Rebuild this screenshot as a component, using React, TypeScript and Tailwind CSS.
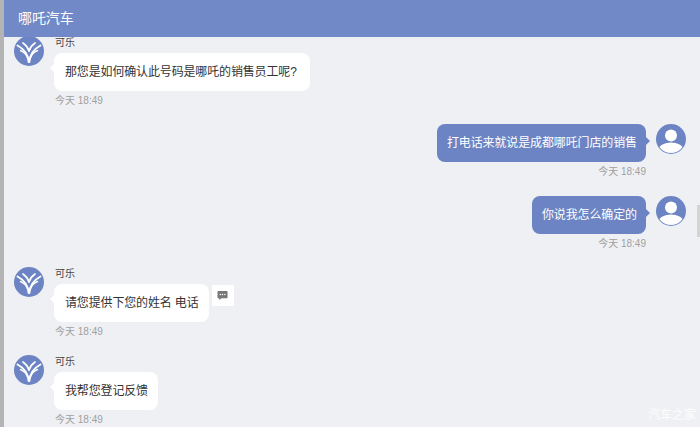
const FONT = "font-['Liberation_Sans','Noto_Sans_CJK_SC',sans-serif]"

function BrandAvatar() {
  return (
    <svg viewBox="0 0 30 30" className="h-[30px] w-[30px] shrink-0">
      <circle cx="15" cy="15" r="15" fill="#6c84c3" />
      <g fill="none" stroke="#fff" strokeLinecap="round">
        <path d="M14.6 26 C14.4 19 10 13 3.5 9.5" strokeWidth="1.9" />
        <path d="M15.4 26 C15.6 19 20 13 26.5 9.5" strokeWidth="1.9" />
        <path d="M13.6 22 C12.5 18.5 10 16 6.5 14.5" strokeWidth="1.5" />
        <path d="M16.4 22 C17.5 18.5 20 16 23.5 14.5" strokeWidth="1.5" />
        <path d="M15 15 C13.8 11.5 12 9 9 7" strokeWidth="1.7" />
        <path d="M15 15 C16.2 11.5 18 9 21 7" strokeWidth="1.7" />
      </g>
    </svg>
  )
}

function UserAvatar() {
  return (
    <svg viewBox="0 0 30 30" className="h-[30px] w-[30px] shrink-0">
      <defs>
        <clipPath id="user-clip">
          <circle cx="15" cy="15" r="14" />
        </clipPath>
      </defs>
      <circle cx="15" cy="15" r="15" fill="#6c84c3" />
      <g clipPath="url(#user-clip)" fill="#fff">
        <circle cx="15" cy="11.5" r="6" />
        <ellipse cx="15" cy="25" rx="12" ry="6.5" />
      </g>
    </svg>
  )
}

function Incoming({ text, note, wide }: { text: string; note?: boolean; wide?: boolean }) {
  return (
    <div className="mb-[14px] flex gap-[10px] pl-[10px]">
      <BrandAvatar />
      <div className="flex flex-col items-start">
        <div className="h-[17px] pl-px text-[10px] leading-[13px] text-[#444]">可乐</div>
        <div className="flex items-start gap-[3px]">
          <div
            className={`relative flex h-[38px] items-center rounded-[8px] bg-white pl-[11px] text-[12px] tracking-[-0.15px] text-[#333] ${wide ? "w-[256px]" : "pr-[10px]"}`}
          >
            <span className="absolute top-[11px] -left-[4px] h-0 w-0 border-y-[4px] border-r-[4px] border-y-transparent border-r-white" />
            {text}
          </div>
          {note && (
            <div className="mt-px flex h-[21px] w-[22px] items-center justify-center bg-white">
              <svg viewBox="0 0 12 12" className="h-[11px] w-[11px]">
                <path d="M1.5 1h9a1 1 0 0 1 1 1v6a1 1 0 0 1-1 1H5L2.5 11V9h-1a1 1 0 0 1-1-1V2a1 1 0 0 1 1-1z" fill="#777" />
                <circle cx="3.5" cy="5" r="0.8" fill="#fff" />
                <circle cx="6" cy="5" r="0.8" fill="#fff" />
                <circle cx="8.5" cy="5" r="0.8" fill="#fff" />
              </svg>
            </div>
          )}
        </div>
        <div className="pl-px text-[10px] leading-[19px] text-[#a0a0a0]">今天 18:49</div>
      </div>
    </div>
  )
}

function Outgoing({ text }: { text: string }) {
  return (
    <div className="mb-[14.5px] flex justify-end gap-[10px] pr-[14px]">
      <div className="flex flex-col items-end">
        <div className="relative flex h-[38px] items-center rounded-[8px] bg-[#6c84c3] pr-[9px] pl-[10px] text-[12px] tracking-[-0.12px] text-white">
          {text}
          <span className="absolute top-[13px] -right-[4px] h-0 w-0 border-y-[4px] border-l-[4px] border-y-transparent border-l-[#6c84c3]" />
        </div>
        <div className="text-[10px] leading-[19px] text-[#a0a0a0]">今天 18:49</div>
      </div>
      <UserAvatar />
    </div>
  )
}

export default function App() {
  return (
    <div className={`flex h-[427px] w-[700px] overflow-hidden bg-[#eff0f3] ${FONT}`}>
      <div className="w-[4px] shrink-0 bg-[#b4b4b4]" />
      <div className="relative flex min-w-0 flex-1 flex-col">
        <header className="relative z-10 flex h-[37px] shrink-0 items-center bg-[#7189c6] pl-[14px] text-[14px] tracking-[-0.1px] text-white">
          哪吒汽车
        </header>
        <div className="-mt-px flex-1 overflow-hidden">
          <Incoming text="那您是如何确认此号码是哪吒的销售员工呢?" wide />
          <Outgoing text="打电话来就说是成都哪吒门店的销售" />
          <Outgoing text="你说我怎么确定的" />
          <Incoming text="请您提供下您的姓名 电话" note />
          <Incoming text="我帮您登记反馈" />
        </div>
        {/* scrollbar thumb and the site's watermark sit over the list */}
        <div className="absolute top-[205px] right-0 h-[32px] w-[3px] bg-[#d4d4d4]" />
        <div className="absolute right-[4px] bottom-[5px] text-[12px] leading-[14px] text-white/80">汽车之家</div>
      </div>
    </div>
  )
}
